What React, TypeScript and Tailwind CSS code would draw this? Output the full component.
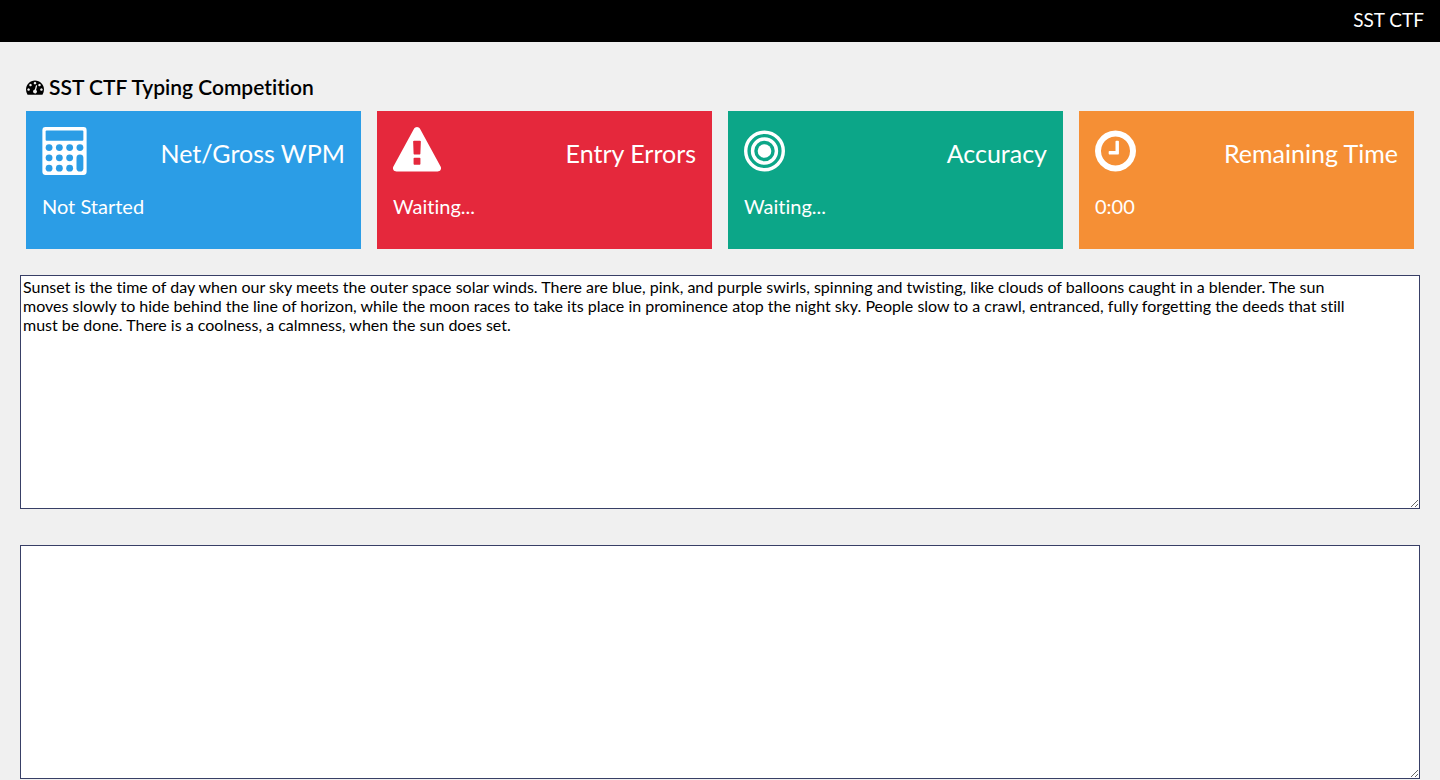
import type { ReactNode } from "react";

const PASSAGE = `Sunset is the time of day when our sky meets the outer space solar winds. There are blue, pink, and purple swirls, spinning and twisting, like clouds of balloons caught in a blender. The sun
moves slowly to hide behind the line of horizon, while the moon races to take its place in prominence atop the night sky. People slow to a crawl, entranced, fully forgetting the deeds that still
must be done. There is a coolness, a calmness, when the sun does set.`;

function DashboardIcon() {
  return (
    <svg className="h-[18px] w-[18px]" viewBox="0 0 1792 1792" fill="currentColor" aria-hidden="true">
      <path d="M384 1152q0-53-37.5-90.5t-90.5-37.5-90.5 37.5-37.5 90.5 37.5 90.5 90.5 37.5 90.5-37.5 37.5-90.5zm192-448q0-53-37.5-90.5t-90.5-37.5-90.5 37.5-37.5 90.5 37.5 90.5 90.5 37.5 90.5-37.5 37.5-90.5zm428 481l101-382q6-26-7.5-48.5t-38.5-29.5-48 6.5-30 39.5l-101 382q-60 5-107 43.5t-63 98.5q-20 77 20 146t117 89 146-20 89-117q16-60-6-117t-72-91zm660-33q0-53-37.5-90.5t-90.5-37.5-90.5 37.5-37.5 90.5 37.5 90.5 90.5 37.5 90.5-37.5 37.5-90.5zm-640-640q0-53-37.5-90.5t-90.5-37.5-90.5 37.5-37.5 90.5 37.5 90.5 90.5 37.5 90.5-37.5 37.5-90.5zm448 192q0-53-37.5-90.5t-90.5-37.5-90.5 37.5-37.5 90.5 37.5 90.5 90.5 37.5 90.5-37.5 37.5-90.5zm320 448q0 261-141 483-19 29-54 29h-1402q-35 0-54-29-141-221-141-483 0-182 71-348t191-286 286-191 348-71 348 71 286 191 191 286 71 348z" />
    </svg>
  );
}

function CalculatorIcon() {
  return (
    <svg className="h-12 w-[45px]" viewBox="0 0 1664 1792" aria-hidden="true">
      <mask id="calculator-keys">
        <rect width="1664" height="1792" rx="128" fill="white" />
        <rect x="128" y="128" width="1408" height="384" rx="40" fill="black" />
        {[768, 1152, 1536].map((cy) =>
          [256, 640, 1024].map((cx) => <circle key={`${cx}-${cy}`} cx={cx} cy={cy} r="128" fill="black" />),
        )}
        <circle cx="1408" cy="768" r="128" fill="black" />
        <rect x="1280" y="1024" width="256" height="640" rx="128" fill="black" />
      </mask>
      <rect width="1664" height="1792" fill="currentColor" mask="url(#calculator-keys)" />
    </svg>
  );
}

function WarningIcon() {
  return (
    <svg className="h-12 w-12" viewBox="0 0 1792 1792" fill="currentColor" aria-hidden="true">
      <path d="M1024 1375v-190q0-14-9.5-23.5t-22.5-9.5h-192q-13 0-22.5 9.5t-9.5 23.5v190q0 14 9.5 23.5t22.5 9.5h192q13 0 22.5-9.5t9.5-23.5zm-2-374l18-459q0-12-10-19-13-11-24-11h-220q-11 0-24 11-10 7-10 21l17 457q0 10 10 16.5t24 6.5h185q14 0 23.5-6.5t10.5-16.5zm-14-934l768 1408q35 63-2 126-17 29-46.5 46t-63.5 17h-1536q-34 0-63.5-17t-46.5-46q-37-63-2-126l768-1408q17-31 47-49t65-18 65 18 47 49z" />
    </svg>
  );
}

function BullseyeIcon() {
  return (
    <svg className="h-12 w-[41px]" viewBox="128 0 1536 1792" aria-hidden="true">
      <circle cx="896" cy="896" r="256" fill="currentColor" />
      <circle cx="896" cy="896" r="448" fill="none" stroke="currentColor" strokeWidth="128" />
      <circle cx="896" cy="896" r="704" fill="none" stroke="currentColor" strokeWidth="128" />
    </svg>
  );
}

function ClockIcon() {
  return (
    <svg className="h-12 w-[41px]" viewBox="128 0 1536 1792" fill="currentColor" aria-hidden="true">
      <path d="M1024 544v448q0 14-9 23t-23 9h-320q-14 0-23-9t-9-23v-64q0-14 9-23t23-9h224v-352q0-14 9-23t23-9h64q14 0 23 9t9 23zm416 352q0-148-73-273t-198-198-273-73-273 73-198 198-73 273 73 273 198 198 273 73 273-73 198-198 73-273zm224 0q0 209-103 385.5t-279.5 279.5-385.5 103-385.5-103-279.5-279.5-103-385.5 103-385.5 279.5-279.5 385.5-103 385.5 103 279.5 279.5 103 385.5z" />
    </svg>
  );
}

function StatCard({ icon, title, value, color }: { icon: ReactNode; title: string; value: string; color: string }) {
  return (
    <section className={`px-4 pt-4 pb-7 text-white ${color}`}>
      <div className="flex items-start justify-between">
        {icon}
        <h3 className="pt-2.5 text-[25px] leading-8">{title}</h3>
      </div>
      <p className="mt-4 text-xl leading-[30px]">{value}</p>
    </section>
  );
}

const BOX =
  "block h-[234px] w-full resize rounded-none border border-[#383f66] bg-white px-0.5 py-px text-base leading-[19px] text-black outline-none";

export default function App() {
  return (
    <div className="min-h-screen bg-[#f0f0f0] font-['Lato','Open_Sans',sans-serif] text-black [font-variant-ligatures:no-common-ligatures]">
      <header className="flex h-[42px] items-start justify-end bg-black px-4 pt-1.5 text-[19px] leading-7 text-white">
        <span>SST CTF</span>
      </header>
      <main className="px-5 pt-[31px]">
        <h1 className="flex items-center gap-[5px] px-1.5 text-[21px] leading-7 font-semibold">
          <DashboardIcon />
          SST CTF Typing Competition
        </h1>
        <div className="mt-2.5 grid grid-cols-4 gap-4 px-1.5">
          <StatCard icon={<CalculatorIcon />} title="Net/Gross WPM" value="Not Started" color="bg-[#2b9de6]" />
          <StatCard icon={<WarningIcon />} title="Entry Errors" value="Waiting..." color="bg-[#e5283c]" />
          <StatCard icon={<BullseyeIcon />} title="Accuracy" value="Waiting..." color="bg-[#0ca688]" />
          <StatCard icon={<ClockIcon />} title="Remaining Time" value="0:00" color="bg-[#f58f35]" />
        </div>
        <div className="mt-[26px] flex flex-col gap-9">
          <textarea className={BOX} aria-label="Text to type" readOnly defaultValue={PASSAGE} />
          <textarea className={BOX} aria-label="Your entry" />
        </div>
      </main>
    </div>
  );
}
